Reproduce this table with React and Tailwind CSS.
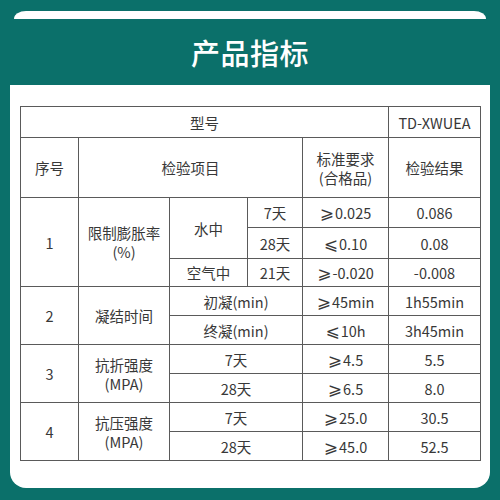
const cell = "border border-[#5a5a5a] text-center align-middle p-0";

function Ge({ children }) {
  return (
    <>
      <span className="text-[17px] leading-[0] mr-[1px]" style={{ fontFamily: '"DejaVu Sans", sans-serif' }}>⩾</span>
      {children}
    </>
  );
}

function Le({ children }) {
  return (
    <>
      <span className="text-[17px] leading-[0] mr-[1px]" style={{ fontFamily: '"DejaVu Sans", sans-serif' }}>⩽</span>
      {children}
    </>
  );
}

export default function App() {
  return (
    <div
      className="w-[500px] h-[500px] bg-[#0b706a] pt-[11px] overflow-hidden"
      style={{ fontFamily: '"Noto Sans CJK SC", "Noto Sans", sans-serif' }}
    >
      <div className="mx-[14px] h-[8px] bg-white rounded-tl-[12px_8px] rounded-tr-[12px_8px]"></div>

      <div className="h-[66px] flex items-center justify-center pt-[2px]">
        <h1 className="text-white text-[29px] font-medium tracking-[0.5px]">产品指标</h1>
      </div>

      <div className="mx-[10px] h-[403px] bg-white rounded-b-[16px] pt-[21px] px-[10px]">
        <table className="w-[460px] table-fixed border-collapse text-[14.5px] text-[#383838] leading-[19px]">
          <colgroup>
            <col className="w-[58px]" />
            <col className="w-[91px]" />
            <col className="w-[78px]" />
            <col className="w-[55px]" />
            <col className="w-[86px]" />
            <col className="w-[92px]" />
          </colgroup>
          <tbody>
            <tr className="h-[31px]">
              <td className={cell} colSpan={5}>型号</td>
              <td className={cell}>TD-XWUEA</td>
            </tr>
            <tr className="h-[60px]">
              <td className={cell}>序号</td>
              <td className={cell} colSpan={3}>检验项目</td>
              <td className={cell}>
                标准要求
                <br />
                (合格品)
              </td>
              <td className={cell}>检验结果</td>
            </tr>

            <tr className="h-[30px]">
              <td className={cell} rowSpan={3}>1</td>
              <td className={cell} rowSpan={3}>
                限制膨胀率
                <br />
                (%)
              </td>
              <td className={cell} rowSpan={2}>水中</td>
              <td className={cell}>7天</td>
              <td className={cell}><Ge>0.025</Ge></td>
              <td className={cell}>0.086</td>
            </tr>
            <tr className="h-[31px]">
              <td className={cell}>28天</td>
              <td className={cell}><Le>0.10</Le></td>
              <td className={cell}>0.08</td>
            </tr>
            <tr className="h-[28px]">
              <td className={cell}>空气中</td>
              <td className={cell}>21天</td>
              <td className={cell}><Ge>-0.020</Ge></td>
              <td className={cell}>-0.008</td>
            </tr>

            <tr className="h-[29px]">
              <td className={cell} rowSpan={2}>2</td>
              <td className={cell} rowSpan={2}>凝结时间</td>
              <td className={cell} colSpan={2}>初凝(min)</td>
              <td className={cell}><Ge>45min</Ge></td>
              <td className={cell}>1h55min</td>
            </tr>
            <tr className="h-[29px]">
              <td className={cell} colSpan={2}>终凝(min)</td>
              <td className={cell}><Le>10h</Le></td>
              <td className={cell}>3h45min</td>
            </tr>

            <tr className="h-[29px]">
              <td className={cell} rowSpan={2}>3</td>
              <td className={cell} rowSpan={2}>
                抗折强度
                <br />
                (MPA)
              </td>
              <td className={cell} colSpan={2}>7天</td>
              <td className={cell}><Ge>4.5</Ge></td>
              <td className={cell}>5.5</td>
            </tr>
            <tr className="h-[29px]">
              <td className={cell} colSpan={2}>28天</td>
              <td className={cell}><Ge>6.5</Ge></td>
              <td className={cell}>8.0</td>
            </tr>

            <tr className="h-[29px]">
              <td className={cell} rowSpan={2}>4</td>
              <td className={cell} rowSpan={2}>
                抗压强度
                <br />
                (MPA)
              </td>
              <td className={cell} colSpan={2}>7天</td>
              <td className={cell}><Ge>25.0</Ge></td>
              <td className={cell}>30.5</td>
            </tr>
            <tr className="h-[29px]">
              <td className={cell} colSpan={2}>28天</td>
              <td className={cell}><Ge>45.0</Ge></td>
              <td className={cell}>52.5</td>
            </tr>
          </tbody>
        </table>
      </div>
    </div>
  );
}
